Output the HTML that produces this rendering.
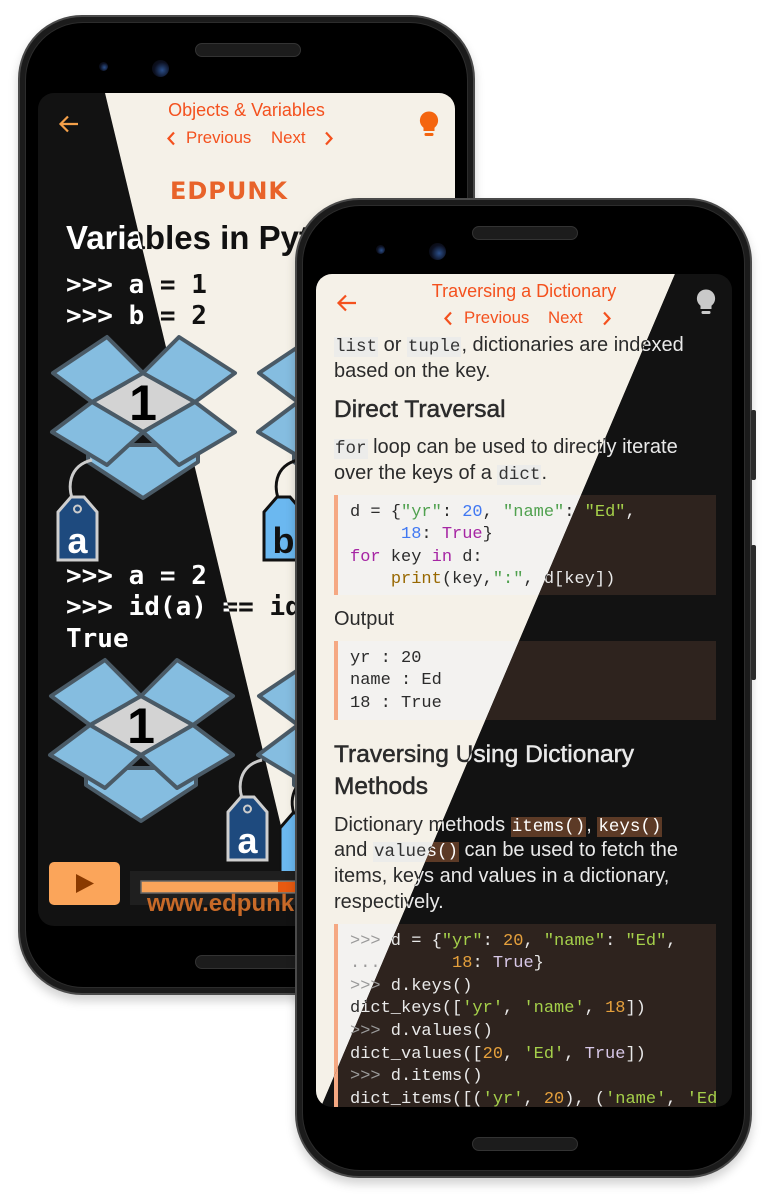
<!DOCTYPE html>
<html><head><meta charset="utf-8">
<style>
*{margin:0;padding:0;box-sizing:border-box}
body{width:771px;height:1200px;background:#fff;position:relative;overflow:hidden;font-family:"Liberation Sans",sans-serif}
.phone{position:absolute;border-radius:64px;background:#1b1b1b;border:2px solid #4a4a4a;box-shadow:0 6px 10px rgba(0,0,0,.18)}
.phone .in{position:absolute;left:5px;top:5px;right:5px;bottom:5px;border-radius:58px;background:#000;border:1.5px solid #2c2c2c}
.spk{position:absolute;height:14px;border-radius:7px;background:#1c1c1c;border:1px solid #333}
.cam{position:absolute;border-radius:50%;background:radial-gradient(circle at 60% 60%,#2b4f8a 0,#0c1020 55%,#050505 100%)}
.scr{position:absolute;overflow:hidden;border-radius:16px}
.lay{position:absolute;left:0;top:0;width:100%;height:100%}
.light{--bg:#f5f1e8;--tx:#2b2b2b;--or:#f4511e;--ar:#f4511e;--bulb:#f4650f;--cbg:#f3f2f0;--ic:#ececea;--ictx:#333;--str:#50a14f;--num:#4078f2;--kw:#a626a4;--fn:#986801;--tr:#a626a4;--pr:#9a9a9a;--big:#111}
.dark{--bg:#121212;--tx:#e9e9e9;--or:#f4511e;--ar:#f4a04a;--bulb:#c9c9c9;--cbg:#2e231e;--ic:#5c3a26;--ictx:#fff;--str:#a5d04a;--num:#e5a03c;--kw:#c678dd;--fn:#e5c07b;--tr:#d8c8e8;--pr:#9a9a9a;--big:#fff}
.lay{background:var(--bg);color:var(--tx)}
.ab{position:absolute;white-space:pre}
.title{left:0;width:100%;text-align:center;color:var(--or);font-size:18px;line-height:22px}
.nav{color:var(--or);font-size:16.8px;line-height:22px}
.p{left:18px;font-size:20px;line-height:26px}
code{font-family:"Liberation Mono",monospace;font-size:17.5px;background:var(--ic);color:var(--ictx);padding:0 1px}
.blk{position:absolute;left:18px;width:382px;background:var(--cbg);border-left:4px solid #f5a882;font-family:"Liberation Mono",monospace;font-size:17px;line-height:22.6px;padding:6.7px 0 0 12px;white-space:pre;color:var(--tx);overflow:hidden}
.s{color:var(--str)}.n{color:var(--num)}.k{color:var(--kw)}.f{color:var(--fn)}.t{color:var(--tr)}.g{color:var(--pr)}
.bm{font-family:"DejaVu Sans Mono",monospace;font-weight:bold;font-size:26px;line-height:31px;color:var(--big);left:28px}
.hd{left:18px;font-size:24.5px;font-weight:normal;-webkit-text-stroke:0.5px currentColor;line-height:32px}
</style></head><body>

<div class="phone" style="left:18px;top:15px;width:457px;height:980px"><div class="in"></div></div>
<div class="spk" style="left:195px;top:43px;width:106px"></div>
<div class="spk" style="left:195px;top:955px;width:106px"></div>
<div class="cam" style="left:99px;top:62px;width:9px;height:9px"></div>
<div class="cam" style="left:152px;top:60px;width:17px;height:17px"></div>

<div class="scr" style="left:38px;top:93px;width:417px;height:833px">
  <div class="lay dark" style="clip-path:polygon(0 0,67px 0,267px 833px,0 833px)">
    <svg class="ab" style="left:19px;top:19px" width="24" height="24" viewBox="0 0 24 24"><path d="M21 12H4M11 4.5L3.5 12 11 19.5" stroke="var(--ar)" stroke-width="2.2" fill="none"/></svg>
    <div class="ab" style="left:28px;top:126px;font-size:33px;font-weight:bold;color:var(--big)">Variables in Python</div>
    <div class="ab bm" style="top:177px">&gt;&gt;&gt; a = 1</div>
    <div class="ab bm" style="top:208px">&gt;&gt;&gt; b = 2</div>
    <div class="ab bm" style="top:468px">&gt;&gt;&gt; a = 2</div>
    <div class="ab bm" style="top:499px">&gt;&gt;&gt; id(a) == id(2)</div>
    <div class="ab bm" style="top:531px">True</div>
  </div>
  <div class="lay light" style="clip-path:polygon(67px 0,417px 0,417px 833px,267px 833px)">
    <div class="ab title" style="top:6px">Objects &amp; Variables</div>
    <svg class="ab" style="left:128px;top:38px" width="10" height="15" viewBox="0 0 10 15"><path d="M8 1.5L2.5 7.5 8 13.5" stroke="var(--or)" stroke-width="2.2" fill="none"/></svg>
    <div class="ab nav" style="left:148px;top:34px">Previous</div>
    <div class="ab nav" style="left:233px;top:34px">Next</div>
    <svg class="ab" style="left:286px;top:38px" width="10" height="15" viewBox="0 0 10 15"><path d="M2 1.5L7.5 7.5 2 13.5" stroke="var(--or)" stroke-width="2.2" fill="none"/></svg>
    <svg class="ab" style="left:381px;top:18px" width="20" height="27" viewBox="0 0 20 27"><path d="M10 0.5a9 9 0 0 0-5.5 16.2V20h11v-3.3A9 9 0 0 0 10 .5z" fill="var(--bulb)"/><rect x="5.5" y="22" width="9" height="3" rx="1.2" fill="var(--bulb)"/></svg>
    <div class="ab" style="left:126px;top:84px;width:130px;text-align:center;color:#e8632a;font-size:24px;font-weight:bold;letter-spacing:1px;font-family:'DejaVu Sans',sans-serif">EDPUNK</div>
    <div class="ab" style="left:28px;top:126px;font-size:33px;font-weight:bold;color:var(--big)">Variables in Python</div>
    <div class="ab bm" style="top:177px">&gt;&gt;&gt; a = 1</div>
    <div class="ab bm" style="top:208px">&gt;&gt;&gt; b = 2</div>
    <div class="ab bm" style="top:468px">&gt;&gt;&gt; a = 2</div>
    <div class="ab bm" style="top:499px">&gt;&gt;&gt; id(a) == id(2)</div>
    <div class="ab bm" style="top:531px">True</div>
  </div>
  <svg class="ab" style="left:0;top:0" width="417" height="833" viewBox="0 0 417 833">
    <defs>
      <g id="box" stroke="#4a5a66" stroke-width="4" stroke-linejoin="round" fill="#85bde0">
        <polygon points="36,108 36,125 91,161 146,125 146,108"/>
        <polygon points="40,65 91,36 143,65 91,95" fill="#d3d3d3"/>
        <polygon points="1,36 55,0 91,36 40,65"/>
        <polygon points="91,36 127,0 183,36 143,65"/>
        <polygon points="0,95 40,65 91,95 55,128"/>
        <polygon points="91,95 143,65 183,95 127,128"/>
      </g>
    </defs>
    <g transform="translate(14,244)"><use href="#box"/><text x="91" y="83" text-anchor="middle" font-family="Liberation Sans" font-weight="bold" font-size="50" fill="#000">1</text>
      <path d="M25,172 C12,150 18,128 40,123" stroke="#ccc" stroke-width="3" fill="none"/>
      <path d="M6,175 L19,160 L32,160 L45,175 L45,223 L6,223 Z" fill="#1e4a7e" stroke="#cfcfcf" stroke-width="3"/>
      <circle cx="25.5" cy="172" r="3.5" fill="none" stroke="#ccc" stroke-width="2"/>
      <text x="25.5" y="216" text-anchor="middle" font-family="Liberation Sans" font-weight="bold" font-size="36" fill="#fff">a</text></g>
    <g transform="translate(220,244)"><use href="#box"/>
      <path d="M25,172 C12,150 18,128 40,123" stroke="#111" stroke-width="3" fill="none"/>
      <path d="M6,175 L19,160 L32,160 L45,175 L45,223 L6,223 Z" fill="#6bb8f0" stroke="#111" stroke-width="3"/>
      <text x="25.5" y="216" text-anchor="middle" font-family="Liberation Sans" font-weight="bold" font-size="36" fill="#111">b</text></g>
    <g transform="translate(12,567)"><use href="#box"/><text x="91" y="83" text-anchor="middle" font-family="Liberation Sans" font-weight="bold" font-size="50" fill="#000">1</text></g>
    <g transform="translate(220,567)"><use href="#box"/></g>
    <g transform="translate(184,544)">
      <path d="M25,172 C12,150 18,128 40,123" stroke="#ccc" stroke-width="3" fill="none"/>
      <path d="M6,175 L19,160 L32,160 L45,175 L45,223 L6,223 Z" fill="#1e4a7e" stroke="#cfcfcf" stroke-width="3"/>
      <circle cx="25.5" cy="172" r="3.5" fill="none" stroke="#ccc" stroke-width="2"/>
      <text x="25.5" y="216" text-anchor="middle" font-family="Liberation Sans" font-weight="bold" font-size="36" fill="#fff">a</text></g>
    <g transform="translate(236,560)">
      <path d="M25,172 C12,150 18,128 40,123" stroke="#111" stroke-width="3" fill="none"/>
      <path d="M6,175 L19,160 L32,160 L45,175 L45,223 L6,223 Z" fill="#6bb8f0" stroke="#111" stroke-width="3"/></g>
    <rect x="92" y="778" width="325" height="34" fill="#1f1f1f"/>
    <text x="109" y="818" font-family="Liberation Sans" font-weight="bold" font-size="24" fill="#c86a28">www.edpunk.com</text>
    <rect x="103" y="788" width="200" height="12" fill="#f9a45a" stroke="#666" stroke-width="1.5"/>
    <rect x="240" y="789" width="62" height="10" fill="#e85a10"/>
    <rect x="11" y="769" width="71" height="43" rx="5" fill="#fba55a"/>
    <polygon points="38,781 38,800 56,790.5" fill="#8a3a00"/>
  </svg>
</div>

<div class="phone" style="left:295px;top:198px;width:457px;height:980px"><div class="in"></div></div>
<div style="position:absolute;left:751px;top:410px;width:5px;height:70px;background:#2a2a2a;border-radius:2px"></div>
<div style="position:absolute;left:751px;top:545px;width:5px;height:135px;background:#2a2a2a;border-radius:2px"></div>
<div class="spk" style="left:472px;top:226px;width:106px"></div>
<div class="spk" style="left:472px;top:1137px;width:106px"></div>
<div class="cam" style="left:376px;top:245px;width:9px;height:9px"></div>
<div class="cam" style="left:429px;top:243px;width:17px;height:17px"></div>

<div class="scr" style="left:316px;top:274px;width:416px;height:833px">
  <div class="lay light" style="clip-path:polygon(0 0,359px 0,5px 833px,0 833px)">
    <svg class="ab" style="left:19px;top:17px" width="24" height="24" viewBox="0 0 24 24"><path d="M21 12H4M11 4.5L3.5 12 11 19.5" stroke="var(--ar)" stroke-width="2.2" fill="none"/></svg>
    <div class="ab title" style="top:6px">Traversing a Dictionary</div>
    <svg class="ab" style="left:127px;top:37px" width="10" height="15" viewBox="0 0 10 15"><path d="M8 1.5L2.5 7.5 8 13.5" stroke="var(--or)" stroke-width="2.2" fill="none"/></svg>
    <div class="ab nav" style="left:148px;top:33px">Previous</div>
    <div class="ab nav" style="left:232px;top:33px">Next</div>
    <svg class="ab" style="left:286px;top:37px" width="10" height="15" viewBox="0 0 10 15"><path d="M2 1.5L7.5 7.5 2 13.5" stroke="var(--or)" stroke-width="2.2" fill="none"/></svg>
    <div class="ab p" style="top:58px"><code>list</code> or <code>tuple</code>, dictionaries are indexed</div>
    <div class="ab p" style="top:84px">based on the key.</div>
    <div class="ab hd" style="top:120px">Direct Traversal</div>
    <div class="ab p" style="top:160px"><code>for</code> loop can be used to directly iterate</div>
    <div class="ab p" style="top:186px">over the keys of a <code>dict</code>.</div>
    <div class="blk" style="top:221px;height:100px">d = {<span class="s">"yr"</span>: <span class="n">20</span>, <span class="s">"name"</span>: <span class="s">"Ed"</span>,
     <span class="n">18</span>: <span class="t">True</span>}
<span class="k">for</span> key <span class="k">in</span> d:
    <span class="f">print</span>(key,<span class="s">":"</span>, d[key])</div>
    <div class="ab p" style="top:332px">Output</div>
    <div class="blk" style="top:367px;height:79px">yr : 20
name : Ed
18 : True</div>
    <div class="ab hd" style="top:465px">Traversing Using Dictionary</div>
    <div class="ab hd" style="top:497px">Methods</div>
    <div class="ab p" style="top:538px">Dictionary methods <code>items()</code>, <code>keys()</code></div>
    <div class="ab p" style="top:563px">and <code>values()</code> can be used to fetch the</div>
    <div class="ab p" style="top:589px">items, keys and values in a dictionary,</div>
    <div class="ab p" style="top:615px">respectively.</div>
    <div class="blk" style="top:650px;height:200px"><span class="g">&gt;&gt;&gt;</span> d = {<span class="s">"yr"</span>: <span class="n">20</span>, <span class="s">"name"</span>: <span class="s">"Ed"</span>,
<span class="g">...</span>       <span class="n">18</span>: <span class="t">True</span>}
<span class="g">&gt;&gt;&gt;</span> d.keys()
dict_keys([<span class="s">'yr'</span>, <span class="s">'name'</span>, <span class="n">18</span>])
<span class="g">&gt;&gt;&gt;</span> d.values()
dict_values([<span class="n">20</span>, <span class="s">'Ed'</span>, <span class="t">True</span>])
<span class="g">&gt;&gt;&gt;</span> d.items()
dict_items([(<span class="s">'yr'</span>, <span class="n">20</span>), (<span class="s">'name'</span>, <span class="s">'Ed'</span>)])</div>
  </div>
  <div class="lay dark" style="clip-path:polygon(359px 0,416px 0,416px 833px,5px 833px)">
    <svg class="ab" style="left:380px;top:15px" width="20" height="27" viewBox="0 0 20 27"><path d="M10 0.5a9 9 0 0 0-5.5 16.2V20h11v-3.3A9 9 0 0 0 10 .5z" fill="var(--bulb)"/><rect x="5.5" y="22" width="9" height="3" rx="1.2" fill="var(--bulb)"/></svg>
    <div class="ab title" style="top:6px">Traversing a Dictionary</div>
    <div class="ab p" style="top:58px"><code>list</code> or <code>tuple</code>, dictionaries are indexed</div>
    <div class="ab p" style="top:84px">based on the key.</div>
    <div class="ab hd" style="top:120px">Direct Traversal</div>
    <div class="ab p" style="top:160px"><code>for</code> loop can be used to directly iterate</div>
    <div class="ab p" style="top:186px">over the keys of a <code>dict</code>.</div>
    <div class="blk" style="top:221px;height:100px">d = {<span class="s">"yr"</span>: <span class="n">20</span>, <span class="s">"name"</span>: <span class="s">"Ed"</span>,
     <span class="n">18</span>: <span class="t">True</span>}
<span class="k">for</span> key <span class="k">in</span> d:
    <span class="f">print</span>(key,<span class="s">":"</span>, d[key])</div>
    <div class="ab p" style="top:332px">Output</div>
    <div class="blk" style="top:367px;height:79px">yr : 20
name : Ed
18 : True</div>
    <div class="ab hd" style="top:465px">Traversing Using Dictionary</div>
    <div class="ab hd" style="top:497px">Methods</div>
    <div class="ab p" style="top:538px">Dictionary methods <code>items()</code>, <code>keys()</code></div>
    <div class="ab p" style="top:563px">and <code>values()</code> can be used to fetch the</div>
    <div class="ab p" style="top:589px">items, keys and values in a dictionary,</div>
    <div class="ab p" style="top:615px">respectively.</div>
    <div class="blk" style="top:650px;height:200px"><span class="g">&gt;&gt;&gt;</span> d = {<span class="s">"yr"</span>: <span class="n">20</span>, <span class="s">"name"</span>: <span class="s">"Ed"</span>,
<span class="g">...</span>       <span class="n">18</span>: <span class="t">True</span>}
<span class="g">&gt;&gt;&gt;</span> d.keys()
dict_keys([<span class="s">'yr'</span>, <span class="s">'name'</span>, <span class="n">18</span>])
<span class="g">&gt;&gt;&gt;</span> d.values()
dict_values([<span class="n">20</span>, <span class="s">'Ed'</span>, <span class="t">True</span>])
<span class="g">&gt;&gt;&gt;</span> d.items()
dict_items([(<span class="s">'yr'</span>, <span class="n">20</span>), (<span class="s">'name'</span>, <span class="s">'Ed'</span>)])</div>
  </div>
</div>

</body></html>
